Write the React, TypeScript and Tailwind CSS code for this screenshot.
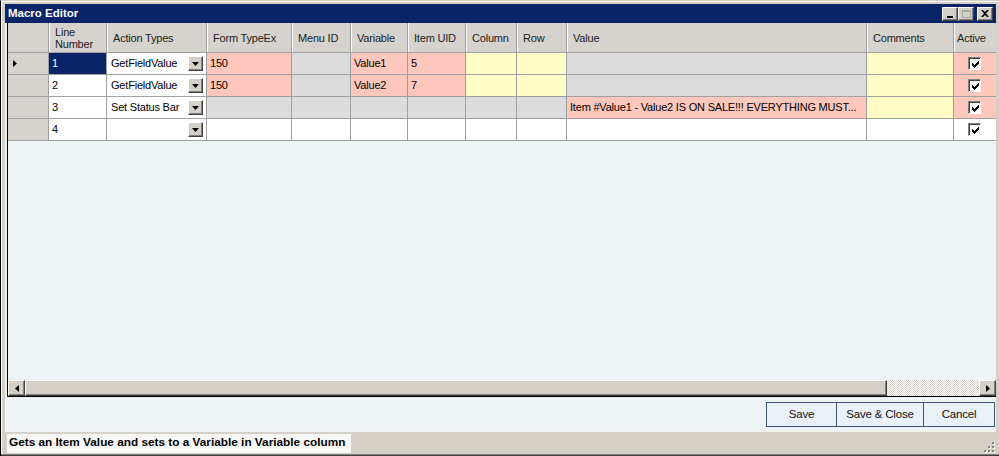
import React from 'react';

type Tone = 'w' | 'p' | 'y' | 'g';

interface Col {
  key: string;
  label: React.ReactNode;
  width: string;
}

const COLS: Col[] = [
  { key: 'line', label: <>Line<br />Number</>, width: 'w-[58px]' },
  { key: 'action', label: 'Action Types', width: 'w-[100px]' },
  { key: 'form', label: 'Form TypeEx', width: 'w-[85px]' },
  { key: 'menu', label: 'Menu ID', width: 'w-[59px]' },
  { key: 'variable', label: 'Variable', width: 'w-[57px]' },
  { key: 'item', label: 'Item UID', width: 'w-[58px]' },
  { key: 'column', label: 'Column', width: 'w-[51px]' },
  { key: 'row', label: 'Row', width: 'w-[50px]' },
  { key: 'value', label: 'Value', width: 'w-[300px]' },
  { key: 'comments', label: 'Comments', width: 'w-[87px]' },
  { key: 'active', label: 'Active', width: 'w-[43px]' },
];

const TONES: Record<Tone, string> = {
  w: 'bg-white',
  p: 'bg-[#fdc8bb]',
  y: 'bg-[#fffcc6]',
  g: 'bg-[#dcdcdc]',
};

interface MacroRow {
  line: string;
  action: string;
  values: Record<string, string>;
  tones: Tone[]; // form, menu, variable, item, column, row, value, comments, active
}

const ROWS: MacroRow[] = [
  {
    line: '1',
    action: 'GetFieldValue',
    values: { form: '150', variable: 'Value1', item: '5' },
    tones: ['p', 'g', 'p', 'p', 'y', 'y', 'g', 'y', 'p'],
  },
  {
    line: '2',
    action: 'GetFieldValue',
    values: { form: '150', variable: 'Value2', item: '7' },
    tones: ['p', 'g', 'p', 'p', 'y', 'y', 'g', 'y', 'p'],
  },
  {
    line: '3',
    action: 'Set Status Bar',
    values: { value: 'Item #Value1 - Value2 IS ON SALE!!! EVERYTHING MUST...' },
    tones: ['g', 'g', 'g', 'g', 'g', 'g', 'p', 'y', 'p'],
  },
  {
    line: '4',
    action: '',
    values: {},
    tones: ['w', 'w', 'w', 'w', 'w', 'w', 'w', 'w', 'w'],
  },
];

// classic 7x7 check glyph, one 3px run per column
const CHECK_RUNS = [2, 3, 4, 3, 2, 1, 0];

const DropButton = () => (
  <div className="w-[15px] h-[15px] bg-[#d4d0c8] border border-t-white border-l-white border-r-[#404040] border-b-[#404040] shadow-[inset_-1px_-1px_0_#808080] flex items-center justify-center shrink-0">
    <svg width="7" height="4" viewBox="0 0 7 4">
      <path d="M0 0h7L3.5 4z" fill="#000" />
    </svg>
  </div>
);

const CheckBox = () => (
  <div className="w-[13px] h-[13px] bg-white border border-t-[#808080] border-l-[#808080] border-r-white border-b-white shadow-[inset_1px_1px_0_#404040] flex items-center justify-center pl-[1px] pt-[1px]">
    <svg width="7" height="7" viewBox="0 0 7 7">
      {CHECK_RUNS.map((top, x) => (
        <rect key={x} x={x} y={top} width="1" height="3" fill="#000" />
      ))}
    </svg>
  </div>
);

const TitleButton = ({ children }: { children: React.ReactNode }) => (
  <div className="w-[16px] h-[14px] bg-[#d4d0c8] border border-t-white border-l-white border-r-[#404040] border-b-[#404040] shadow-[inset_-1px_-1px_0_#808080] flex items-center justify-center">
    {children}
  </div>
);

const ScrollArrow = ({ dir }: { dir: 'left' | 'right' }) => (
  <div className="w-[17px] h-[16px] bg-[#d4d0c8] border border-t-white border-l-white border-r-[#404040] border-b-[#404040] shadow-[inset_-1px_-1px_0_#808080] flex items-center justify-center shrink-0">
    <svg width="4" height="7" viewBox="0 0 4 7">
      {dir === 'left' ? <path d="M4 0v7L0 3.5z" fill="#000" /> : <path d="M0 0v7l4-3.5z" fill="#000" />}
    </svg>
  </div>
);

const cellBase = 'h-[22px] border-r border-b border-[#a0a0a0] flex items-center shrink-0 overflow-hidden whitespace-nowrap';

export default function App() {
  return (
    <div className="w-[999px] h-[456px] overflow-hidden bg-[#d4d0c8] flex flex-col pt-[3px] pl-[4px] pr-[3px] font-['Liberation_Sans',Arial,sans-serif] text-[11px] text-black tracking-[-0.2px] border-t border-l border-t-[#d4d0c8] shadow-[inset_1px_1px_0_#ffffff]">
      {/* title bar */}
      <div className="h-[19px] bg-[#0a246a] flex items-center justify-between pl-[3px] pr-[3px] shrink-0">
        <span className="text-white font-bold text-[11.5px] tracking-normal">Macro Editor</span>
        <div className="flex items-center">
          <TitleButton>
            <div className="w-[6px] h-[2px] bg-black mt-[6px] -ml-[1px]" />
          </TitleButton>
          <TitleButton>
            <div className="w-[9px] h-[8px] border border-t-2 border-[#a8a8a8]" />
          </TitleButton>
          <div className="w-[3px]" />
          <TitleButton>
            <svg width="8" height="7" viewBox="0 0 8 7">
              <path d="M0 0h2l2 2 2-2h2L5 3.5 8 7H6L4 5 2 7H0l3-3.5z" fill="#000" />
            </svg>
          </TitleButton>
        </div>
      </div>

      {/* client area */}
      <div className="flex-1 flex flex-col bg-[#eef3f6] pl-[2px]">
        {/* grid */}
        <div className="h-[374px] flex flex-col border-l border-b border-[#000] overflow-hidden">
          {/* header row */}
          <div className="flex h-[30px] shrink-0">
            <div className="w-[41px] h-[30px] bg-[#d6d3ce] border-r border-b border-[#a0a0a0] shrink-0" />
            {COLS.map((c) => (
              <div
                key={c.key}
                className={`${c.width} h-[30px] bg-[#d6d3ce] border-r border-b border-[#a0a0a0] shadow-[inset_1px_0_0_#ffffff] flex items-center leading-[12px] text-[#222] shrink-0 overflow-hidden whitespace-nowrap ${c.key === 'active' ? 'pl-[3px]' : 'pl-[6px]'}`}
              >
                <span>{c.label}</span>
              </div>
            ))}
          </div>

          {/* data rows */}
          {ROWS.map((r, i) => (
            <div key={r.line} className="flex shrink-0">
              <div className="w-[41px] h-[22px] bg-[#d6d3ce] border-r border-b border-[#a0a0a0] flex items-center pl-[5px] shrink-0">
                {i === 0 && (
                  <svg width="4" height="7" viewBox="0 0 4 7">
                    <path d="M0 0v7l4-3.5z" fill="#000" />
                  </svg>
                )}
              </div>
              <div className={`${cellBase} w-[58px] pl-[3px] ${i === 0 ? 'bg-[#0a246a] text-white' : 'bg-white'}`}>{r.line}</div>
              <div className={`${cellBase} w-[100px] bg-white pl-[4px] pr-[3px] justify-between`}>
                <span>{r.action}</span>
                <DropButton />
              </div>
              {COLS.slice(2).map((c, j) => (
                <div
                  key={c.key}
                  className={`${cellBase} ${c.width} ${TONES[r.tones[j]]} ${c.key === 'active' ? 'justify-center pr-[2px] border-r-0' : 'pl-[3px]'}`}
                >
                  {c.key === 'active' ? <CheckBox /> : r.values[c.key] ?? ''}
                </div>
              ))}
            </div>
          ))}

          <div className="flex-1" />

          {/* horizontal scroll bar */}
          <div className="h-[16px] flex shrink-0 bg-[#d4d0c8]">
            <ScrollArrow dir="left" />
            <div className="w-[862px] h-[16px] bg-[#d4d0c8] border border-t-white border-l-white border-r-[#404040] border-b-[#404040] shadow-[inset_-1px_-1px_0_#808080] shrink-0" />
            <div className="flex-1 h-[16px] bg-[image:repeating-conic-gradient(#d4d0c8_0%_25%,#ffffff_0%_50%)] bg-[length:2px_2px]" />
            <ScrollArrow dir="right" />
          </div>
        </div>

        {/* buttons */}
        <div className="h-[34px] flex items-center justify-end pr-[1px] pt-[1px] shrink-0">
          <div className="flex h-[25px] border border-[#3b5675] bg-[#eaf1f6] text-[11.5px] text-[#111]">
            <div className="w-[70px] flex items-center justify-center border-r border-[#3b5675]">Save</div>
            <div className="w-[87px] flex items-center justify-center border-r border-[#3b5675]">Save &amp; Close</div>
            <div className="w-[70px] flex items-center justify-center">Cancel</div>
          </div>
        </div>
      </div>

      {/* status bar */}
      <div className="h-[23px] flex items-center justify-between shrink-0 border-t border-[#f4f3ef] pl-[2px] pr-[1px]">
        <div className="h-[19px] w-[344px] bg-[#f7f7f6] flex items-center pl-[2px] font-bold text-[11.8px] tracking-normal whitespace-nowrap overflow-hidden">
          Gets an Item Value and sets to a Variable in Variable column
        </div>
        <svg width="12" height="12" viewBox="0 0 12 12" className="self-end mb-[1px]">
          {[
            [9, 1],
            [9, 5], [5, 5],
            [9, 9], [5, 9], [1, 9],
          ].map(([x, y]) => (
            <g key={`${x}-${y}`}>
              <rect x={x + 1} y={y + 1} width="2" height="2" fill="#ffffff" />
              <rect x={x} y={y} width="2" height="2" fill="#808080" />
            </g>
          ))}
        </svg>
      </div>
      <div className="h-[2px] shrink-0 -ml-[4px] -mr-[3px] bg-[#808080] border-b border-[#404040]" />
    </div>
  );
}
